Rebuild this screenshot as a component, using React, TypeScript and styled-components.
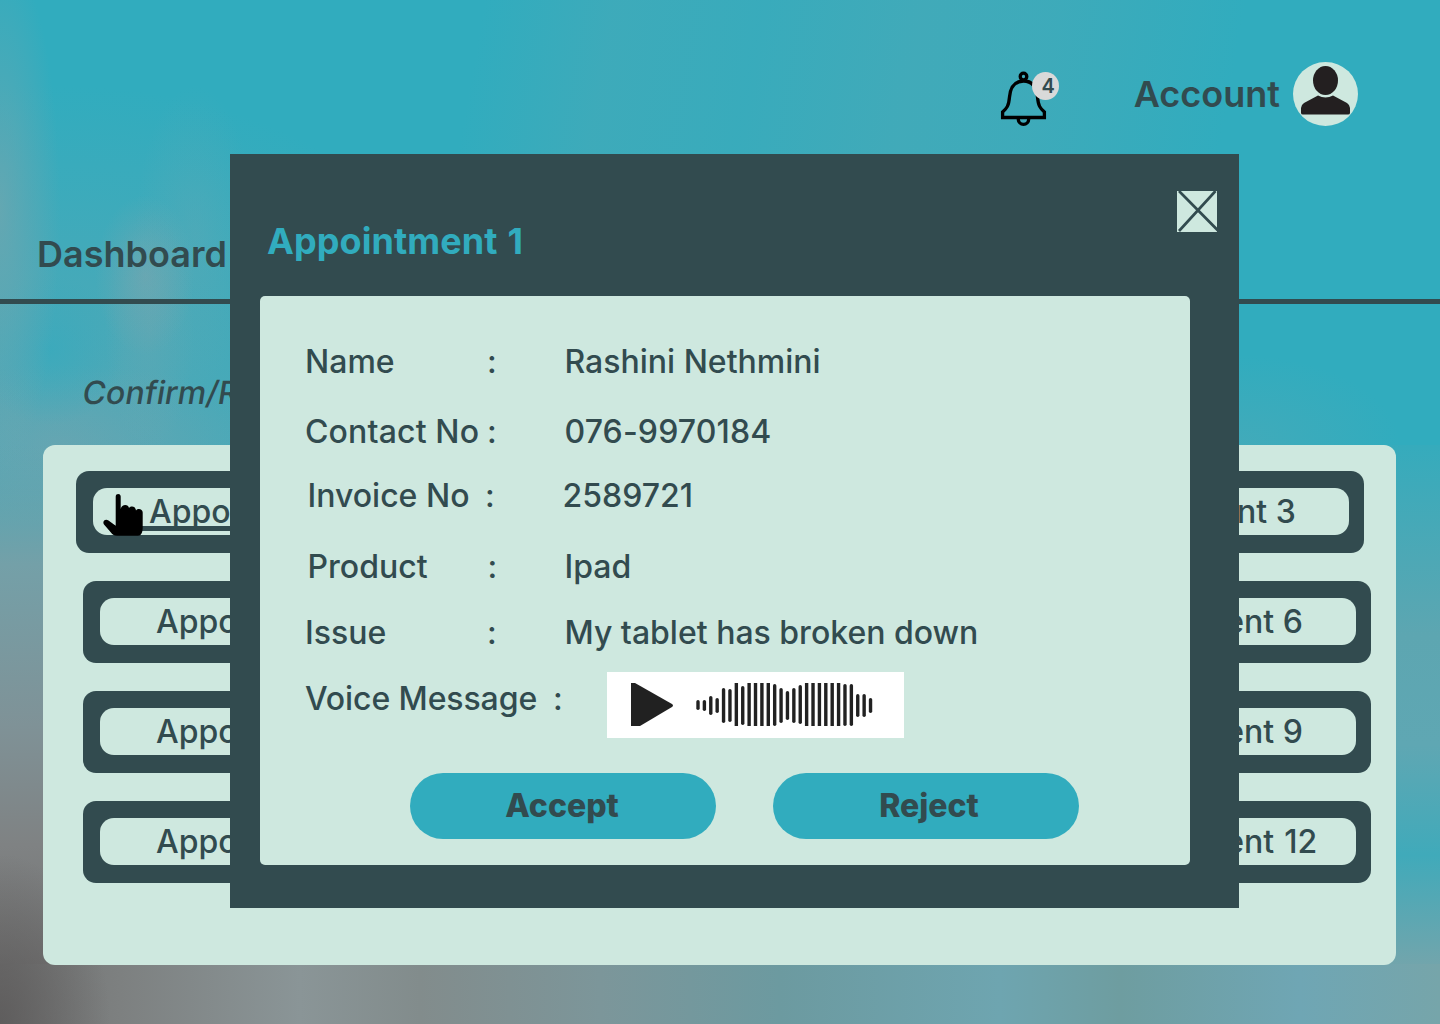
import React from "react";
import styled, { createGlobalStyle } from "styled-components";

const dark = "#324b4f";
const mint = "#cee8df";
const teal = "#31acbe";

const GlobalStyle = createGlobalStyle`
  *, *::before, *::after { box-sizing: border-box; }
  body { margin: 0; font-family: Inter, "Liberation Sans", sans-serif; color: ${dark}; }
  button { font: inherit; color: inherit; border: 0; padding: 0; cursor: pointer; }
  h2, p { margin: 0; font: inherit; }
  svg { display: block; }
`;

const Page = styled.div`
  position: relative;
  display: flex;
  flex-direction: column;
  width: 1440px;
  height: 1024px;
  overflow: hidden;
  background:
    radial-gradient(ellipse 110px 170px at 0px 1024px, rgba(88, 86, 86, 0.75), transparent),
    linear-gradient(to right, #727272 0, #7d8080 120px, #8a9597 300px, #828c8c 420px, #7c969a 600px,
      #6c9aa0 780px, #6ea5b0 1000px, #6e9da0 1120px, #6fa6b4 1300px, #76a5aa 1440px) 0 100% / 100% 60px no-repeat,
    linear-gradient(to bottom, rgba(112, 160, 168, 0) 0, #74a0a8 120px, #7f9297 280px, #7f8283 400px, #737373 520px) 0 445px / 60px 520px no-repeat,
    linear-gradient(to bottom, rgba(64, 169, 184, 0.3) 0, #5da6b1 190px, #5fa7b3 300px, #40aaba 410px, #72a5ac 520px) 100% 445px / 60px 520px no-repeat,
    radial-gradient(ellipse 50px 80px at 145px 275px, rgba(137, 165, 172, 0.45), transparent),
    radial-gradient(ellipse 60px 150px at 195px 235px, rgba(110, 168, 178, 0.3), transparent),
    radial-gradient(ellipse 45px 120px at 150px 330px, rgba(130, 165, 172, 0.25), transparent),
    radial-gradient(ellipse 60px 260px at 0px 210px, rgba(125, 165, 172, 0.6), transparent),
    radial-gradient(ellipse 75px 75px at 50px 350px, rgba(52, 170, 190, 0.65), transparent),
    radial-gradient(ellipse 230px 80px at 60px 445px, rgba(125, 163, 173, 0.4), transparent),
    radial-gradient(ellipse 460px 360px at 60px 445px, rgba(105, 165, 176, 0.65), transparent),
    radial-gradient(ellipse 160px 90px at 1240px 445px, rgba(90, 168, 180, 0.4), transparent),
    linear-gradient(100deg, transparent 33%, rgba(80, 168, 180, 0.4) 42%, rgba(80, 168, 180, 0.25) 52%,
      rgba(80, 168, 180, 0.5) 63%, rgba(80, 168, 180, 0.4) 72%, transparent 85%) 0 0 / 100% 154px no-repeat,
    ${teal};
`;

const Header = styled.header`
  display: flex;
  justify-content: flex-end;
  height: 154px;
  padding: 62px 82px 0 0;
`;

const Notifications = styled.button`
  position: relative;
  width: 60px;
  height: 58px;
  margin: 8px 74px 0 0;
  background: none;
`;

const Count = styled.span`
  position: absolute;
  top: 2px;
  left: 32px;
  width: 27px;
  height: 28px;
  padding-left: 6px;
  border-radius: 50%;
  background: #d9d9d9;
  font-size: 20px;
  font-weight: 600;
  line-height: 28px;
`;

const Account = styled.div`
  display: flex;
  gap: 13px;
  font-size: 36px;
  font-weight: 600;
  line-height: 65px;
`;

const Avatar = styled.span`
  width: 65px;
  height: 64px;
  border-radius: 50%;
  background: ${mint};
`;

const Nav = styled.nav`
  height: 150px;
  padding: 78px 37px 0;
  border-bottom: 5px solid ${dark};
  font-size: 36px;
  font-weight: 600;
  line-height: 44px;
`;

const Intro = styled.div`
  display: flex;
  height: 141px;
  padding: 69px 83px 0;
`;

const IntroText = styled.p`
  height: 39px;
  font-size: 32px;
  font-weight: 500;
  line-height: 39px;
  transform: skewX(-9.4deg);
`;

const Panel = styled.main`
  display: flex;
  flex-direction: column;
  gap: 28px;
  width: 1353px;
  height: 520px;
  margin-left: 43px;
  padding: 26px 25px 0 33px;
  border-radius: 12px;
  background: ${mint};
`;

const TileRow = styled.div<{ $indent: number }>`
  display: flex;
  justify-content: space-between;
  width: 1288px;
  margin-left: ${(p) => p.$indent}px;
`;

const Tile = styled.div`
  width: 367px;
  height: 82px;
  padding: 17px 15px 18px 17px;
  border-radius: 13px;
  background: ${dark};
`;

const TileButton = styled.button<{ $active: boolean; $wide: boolean }>`
  position: relative;
  display: block;
  width: 100%;
  height: 47px;
  padding-left: 56px;
  border-radius: 14px;
  background: ${mint};
  font-size: 32px;
  font-weight: 500;
  line-height: 48px;
  text-align: left;
  white-space: nowrap;
  word-spacing: ${(p) => (p.$wide ? 1.5 : 0)}px;

  &::after {
    content: "";
    display: ${(p) => (p.$active ? "block" : "none")};
    position: absolute;
    left: 40px;
    right: 66px;
    top: 38px;
    height: 5px;
    background: ${dark};
  }
`;

const Pointer = styled.svg`
  position: absolute;
  z-index: 1;
  left: 10px;
  top: 6px;
`;

const Modal = styled.section`
  position: absolute;
  z-index: 2;
  left: 230px;
  top: 154px;
  width: 1009px;
  height: 754px;
  padding: 37px 22px 0 30px;
  background: ${dark};
`;

const ModalHeader = styled.div`
  display: flex;
  justify-content: space-between;
  height: 105px;
`;

const Title = styled.h2`
  padding: 28px 0 0 7px;
  color: ${teal};
  font-size: 36px;
  font-weight: 700;
  line-height: 44px;
  letter-spacing: 0.08px;
  word-spacing: 1.5px;
`;

const Close = styled.button`
  width: 40px;
  height: 41px;
  background: ${mint};
`;

const Card = styled.div`
  width: 930px;
  height: 569px;
  padding-top: 46px;
  border-radius: 5px;
  background: ${mint};
`;

const Field = styled.div<{ $label: number; $colon: number; $value: number; $space: number }>`
  display: grid;
  grid-template-columns: ${(p) => `${p.$colon - p.$label}px ${p.$value - p.$colon}px auto`};
  height: 39px;
  margin-bottom: ${(p) => p.$space}px;
  padding-left: ${(p) => p.$label}px;
  font-size: 32px;
  font-weight: 500;
  line-height: 40px;
  white-space: nowrap;
`;

const Text = styled.span<{ $tracking?: number }>`
  letter-spacing: ${(p) => p.$tracking ?? 0}px;
`;

const Player = styled.div`
  display: flex;
  align-items: center;
  width: 297px;
  height: 66px;
  margin-top: -7px;
  background: #fff;
`;

const Actions = styled.div`
  display: flex;
  gap: 57px;
  padding: 55px 0 0 150px;
`;

const Action = styled.button<{ $shift: number }>`
  width: 306px;
  height: 66px;
  border-radius: 33px;
  background: ${teal};
  font-size: 32px;
  font-weight: 800;
  line-height: 64px;
  text-indent: ${(p) => p.$shift}px;
`;

const bars = [
  [28, 38], [28, 39], [24, 43], [26, 41], [16, 51], [17, 50], [11, 54], [14, 53], [11, 54], [11, 54],
  [11, 54], [11, 54], [12, 54], [16, 51], [19, 48], [16, 51], [13, 52], [11, 54], [11, 54], [11, 54],
  [11, 54], [11, 54], [11, 54], [12, 54], [12, 54], [22, 45], [22, 45], [26, 41],
];

function BellIcon() {
  return (
    <svg width="60" height="58" viewBox="0 0 60 58" fill="none" stroke="#000" strokeWidth="3.300">
      <circle cx="23.500" cy="6.500" r="3.300" />
      <path d="M9.500 27C10.500 16 15 11 23.500 11S36.500 16 37.500 27C38.300 36 40 38 44.400 42V47.500H2.600V42C7 38 8.700 36 9.500 27Z" />
      <path d="M18.200 48.500C18.200 56.300 28.800 56.300 28.800 48.500" />
    </svg>
  );
}

function PersonIcon() {
  return (
    <svg width="65" height="64" viewBox="0 0 65 64" fill="#231f20">
      <ellipse cx="32.500" cy="18.500" rx="12.500" ry="14.500" />
      <path d="M25 33.500Q32.500 37.500 40 33.500L54 41Q57 43 57 46V51Q57 52.500 55 52.500H10Q8 52.500 8 51V46Q8 43 11 41Z" />
    </svg>
  );
}

function Waveform() {
  return (
    <svg width="297" height="66" viewBox="0 0 297 66" fill="#212121">
      <path d="M24 11H28L65 32Q67 33.500 65 35L33 54H24Z" />
      {bars.map(([top, bottom], i) => (
        <rect key={i} x={89.3 + i * 6.39} y={top} width="3.400" height={bottom - top} rx={top === 11 ? 0 : 1.7} />
      ))}
    </svg>
  );
}

function HandPointer() {
  return (
    <Pointer width="40" height="42" viewBox="0 0 40 42">
      <path d="M12.700 2.500C12.700 -0.800 17.700 -0.800 17.700 2.500V15C18.500 10 25.500 10 26 14C28 11.700 32.500 12 33 16.500C35 13.800 39.700 15 39.700 18.500V33C39.700 38 38.500 41.800 35 41.800H14C11 41.800 9 40 7.500 38L1 30.500C-1 27.500 2 24.500 5.500 26.500L12.700 31.700Z" />
    </Pointer>
  );
}

const rows = [[1, 2, 3], [4, 5, 6], [7, 8, 9], [10, 11, 12]];

const fields = [
  { label: "Name", text: "Rashini Nethmini", at: [45, 227, 304.5], space: 31 },
  { label: "Contact No", text: "076-9970184", at: [45, 227, 304.5], space: 25, tracking: 0.15 },
  { label: "Invoice No", text: "2589721", at: [47.5, 225, 302.5], space: 32 },
  { label: "Product", text: "Ipad", at: [47.5, 227.5, 304.5], space: 27 },
  { label: "Issue", text: "My tablet has broken down", at: [45, 227, 304.5], space: 27 },
];

export default function App() {
  return (
    <Page>
      <GlobalStyle />
      <Header>
        <Notifications aria-label="Notifications">
          <BellIcon />
          <Count>4</Count>
        </Notifications>
        <Account>
          Account
          <Avatar><PersonIcon /></Avatar>
        </Account>
      </Header>
      <Nav>Dashboard</Nav>
      <Intro>
        <IntroText>Confirm/Reject</IntroText>
      </Intro>
      <Panel>
        {rows.map((row, r) => (
          <TileRow key={r} $indent={r === 0 ? 0 : 7}>
            {row.map((n) => (
              <Tile key={n}>
                <TileButton $active={n === 1} $wide={n >= 10}>
                  Appointment {n}
                  {n === 1 && <HandPointer />}
                </TileButton>
              </Tile>
            ))}
          </TileRow>
        ))}
      </Panel>
      <Modal>
        <ModalHeader>
          <Title>Appointment 1</Title>
          <Close aria-label="Close">
            <svg width="40" height="41" viewBox="0 0 40 41" stroke={dark} strokeWidth="2.700">
              <path d="M2 0L41 39.500M38.500 0L2 40" />
            </svg>
          </Close>
        </ModalHeader>
        <Card>
          {fields.map((f) => (
            <Field key={f.label} $label={f.at[0]} $colon={f.at[1]} $value={f.at[2]} $space={f.space}>
              <Text $tracking={f.tracking}>{f.label}</Text>
              <Text>:</Text>
              <Text $tracking={f.tracking}>{f.text}</Text>
            </Field>
          ))}
          <Field $label={45} $colon={293} $value={347} $space={0}>
            <Text $tracking={-0.1}>Voice Message</Text>
            <Text>:</Text>
            <Player><Waveform /></Player>
          </Field>
          <Actions>
            <Action $shift={-2}>Accept</Action>
            <Action $shift={6}>Reject</Action>
          </Actions>
        </Card>
      </Modal>
    </Page>
  );
}
